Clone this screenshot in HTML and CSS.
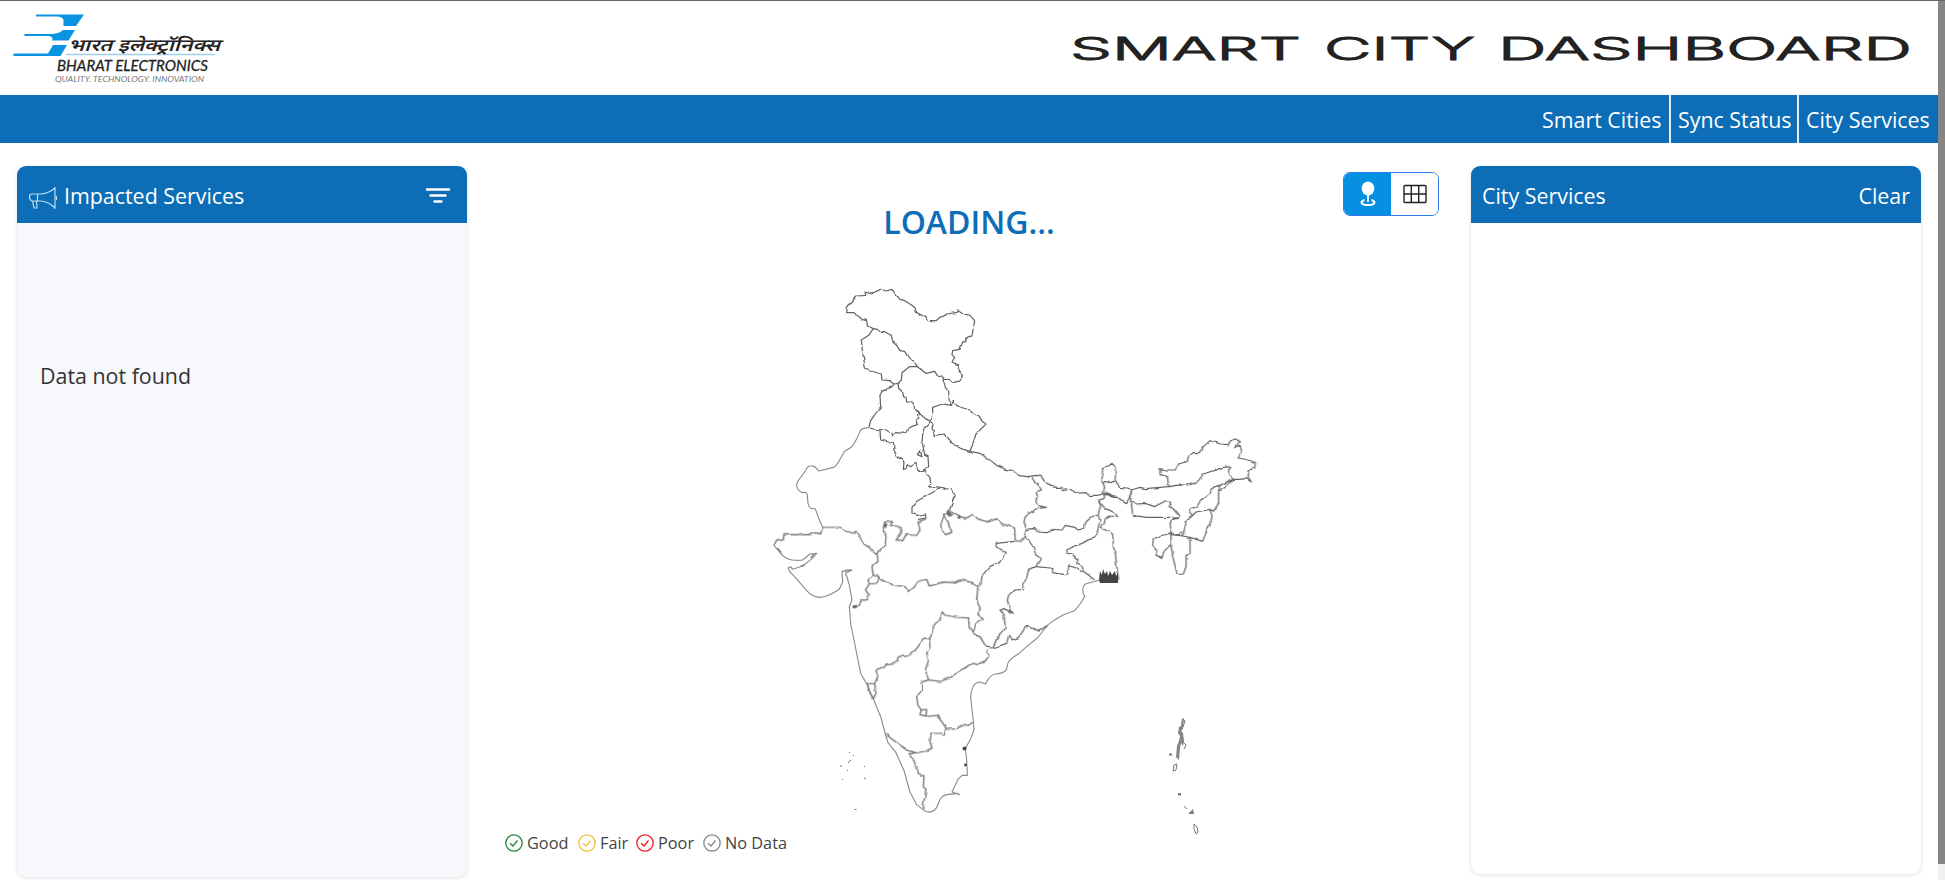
FILE: index.html
```html
<!DOCTYPE html>
<html lang="en">
<head>
<meta charset="utf-8">
<title>Smart City Dashboard</title>
<link rel="stylesheet" href="styles.css">
</head>
<body>
<div class="page">
  <header class="header">
    <svg class="logo" viewBox="0 0 230 90" width="230" height="90">
      <g fill="#0a93e0">
        <path d="M36 14.500H84L76 26H63.500V20Q63 17 58 16.500H36Z"/>
        <path d="M24.500 34H52Q60 33.500 63 30H75L68.500 40.500H52Q54 37.500 49 36H24.500Z"/>
        <path d="M13.500 53.500H48L53 45H67L60.500 56H13.500Z"/>
      </g>
      <path d="M66 54.500H215" stroke="#9fd0f0" stroke-width="1.500"/>
      <text class="logo-hindi" x="68" y="51" textLength="152" lengthAdjust="spacingAndGlyphs">भारत इलेक्ट्रॉनिक्स</text>
      <text class="logo-name" x="57" y="70.500" textLength="151" lengthAdjust="spacingAndGlyphs">BHARAT ELECTRONICS</text>
      <text class="logo-tag" x="55" y="82" textLength="149" lengthAdjust="spacingAndGlyphs">QUALITY. TECHNOLOGY. INNOVATION</text>
    </svg>
    <svg class="title" viewBox="0 0 840 40" width="840" height="40">
      <text x="-2" y="31" textLength="231" lengthAdjust="spacingAndGlyphs">SMART</text>
      <text x="252" y="31" textLength="151" lengthAdjust="spacingAndGlyphs">CITY</text>
      <text x="426" y="31" textLength="414" lengthAdjust="spacingAndGlyphs">DASHBOARD</text>
    </svg>
  </header>
  <nav class="nav">
    <a class="nav-item cities">Smart Cities</a>
    <a class="nav-item sync">Sync Status</a>
    <a class="nav-item services">City Services</a>
  </nav>
  <main class="main">
    <section class="card impacted">
      <div class="card-head">
        <svg class="horn" viewBox="0 0 30 24" width="30" height="24" fill="none" stroke="#b9dcf5" stroke-width="1.200">
          <path d="M27 1V23M27 2Q20 8 12 8H4Q1.500 8 1.500 11T4 15H12Q20 15 27 22M9.500 8V15M4.500 15L6 22H9L8.500 15M28.500 10V14"/>
        </svg>
        <span>Impacted Services</span>
        <svg class="filter" viewBox="0 0 26 18" width="26" height="18" stroke="#fff" stroke-width="2.400" stroke-linecap="round">
          <path d="M2 3.500H24M5.500 9.500H20.500M9.500 15.500H16.500"/>
        </svg>
      </div>
      <div class="card-body"><p class="empty">Data not found</p></div>
    </section>
    <section class="center">
      <h1 class="loading">LOADING...</h1>
      <div class="toggle">
        <button class="toggle-btn active">
          <svg viewBox="0 0 20 26" width="20" height="26">
            <ellipse cx="10" cy="7.500" rx="6.300" ry="7" fill="#fff"/>
            <path d="M10 12V21M6.500 19Q3.500 20 3.500 21.500Q4 24 10 24T16.500 21.500Q16.500 20 13.500 19" fill="none" stroke="#fff" stroke-width="1.900"/>
          </svg>
        </button>
        <button class="toggle-btn">
          <svg viewBox="0 0 24 20" width="24" height="20" fill="none" stroke="#222" stroke-width="1.400">
            <rect x="1" y="1.500" width="22" height="17" rx="1"/>
            <path d="M1 10H23M8.300 1.500V18.500M15.700 1.500V18.500"/>
          </svg>
        </button>
      </div>
      <svg class="map" viewBox="760 270 520 570" width="520" height="570">
        <defs>
          <filter id="rough" filterUnits="userSpaceOnUse" x="760" y="270" width="520" height="570">
            <feTurbulence type="fractalNoise" baseFrequency="0.16" numOctaves="1" seed="4" result="n"/>
            <feDisplacementMap in="SourceGraphic" in2="n" scale="3.5" xChannelSelector="R" yChannelSelector="G"/>
          </filter>
        </defs>
        <g class="borders" filter="url(#rough)">
          <!-- northern states -->
          <g transform="translate(760 270) scale(.33333)">
            <path d="M340 176L322 168 320 152 306 148 292 136 282 128 260 128 262 108 274 96 290 78 320 76 318 66 332 72 362 58 378 63 396 58 406 72 420 88 434 92 450 102 464 112 470 128 486 136 498 140 504 152 528 152 540 142 560 132 592 127 594 122 606 130 630 136 644 152 636 196 622 202 616 212 608 216 600 238 578 242 576 254 584 262 576 276 598 286 598 308 610 318 600 332 582 337 566 328 550 328 546 318 534 320 524 304 498 310 472 290"/>
            <path d="M340 176L352 178 362 188 372 184 386 192 394 196 398 216 410 226 420 242 434 244 446 264 460 272 472 290 448 290 426 308 424 330 414 340 402 342 388 332 366 330 364 312 344 306 316 294 308 250 304 210 326 196Z"/>
            <path d="M414 340L416 356 426 360 430 376 438 382 440 396 452 396 462 404 464 420 474 424 488 436 496 446 512 454 518 440 518 412 548 402 574 406 568 396 566 366 556 352 548 328"/>
            <path d="M402 342L396 350 366 364 360 376 362 410 346 432 332 452 326 474 350 478 378 480 392 488 396 498 404 488 438 490 442 478 454 470 472 464 466 450 476 444 476 426"/>
            <path d="M360 480L362 510 386 516 400 514 402 540 412 560 424 566 432 576 430 598 438 596 442 584 452 590 468 580 474 604 494 598 506 590 504 560 494 556 486 512 490 480 512 454M480 542L486 560 472 554Z"/>
            <path d="M574 406L580 394 590 406 606 414 630 420 640 432 656 440 678 462 662 478 648 492 640 516 630 544 604 536 572 518 566 506 552 492 524 496 516 474 520 460 512 454"/>
            <path d="M494 598L500 612 510 622 512 640 502 652 520 650 544 652 560 656 578 660 584 676 578 692 570 720M540 654L510 672 470 694 456 712 456 730 472 736 496 732 498 744 474 748"/>
          </g>
          <!-- eastern states -->
          <g transform="translate(960 400) scale(.33333)">
            <path d="M30 154L60 160 86 178 110 196 136 208 158 212 176 226 200 230 232 226 244 230 256 248 286 262 306 262 308 272 330 268 350 280 378 278 386 286 412 286 430 282"/>
            <path d="M220 230L222 244 236 256 244 270 228 276 232 288 228 300 236 316 256 322 224 328 196 350 192 366 198 384"/>
            <path d="M430 282L434 262 426 240 428 202 446 198 456 190 466 200 466 242 452 248 430 244M466 242L478 262 500 264 514 270 510 290 500 308 480 298 474 288 458 290 450 282 440 284 434 280 430 282"/>
            <path stroke-width="7" d="M434 284L442 280 452 288 464 290 478 292"/>
            <path d="M514 270L540 262 556 266 626 260 622 230 600 224 600 206 616 210 646 210 656 192 682 184 686 168 700 158 718 158 730 140 750 122 782 132 804 134 812 122 826 116 838 126 826 142 840 136 846 158 834 174 866 180 886 188 884 204 868 212 864 230 874 246 860 236 836 238 820 238 806 224 806 210 814 200 790 202 730 222 712 246 690 254 650 256 626 260"/>
            <path d="M820 238L784 254 776 256 760 262 750 280 722 300 712 318 690 330 696 348M820 238L798 260 780 272 776 256M776 272L776 310 760 334 750 328 730 332 708 336 696 348 680 362 668 408 690 412 728 424 740 390 752 370 756 350 750 328"/>
            <path d="M668 408L636 404M690 416L690 462 678 466 678 500 670 522 652 524 644 492 638 470 634 440 632 396 626 402 598 408 580 418 578 438 590 452 588 466 606 472 614 452 634 432"/>
            <path d="M514 270L512 306 530 312 556 310 584 320 610 306 632 306 628 320 642 330 658 348 652 356 636 352 560 352 518 346 514 310M656 352L640 358 630 370 636 404 658 404 666 394"/>
            <path d="M434 284L432 296 416 300 424 312 436 326 464 338 472 350 446 348 436 356 432 372 422 380 440 392 458 402 460 440 466 460 472 512 476 540"/>
            <path d="M416 300L422 320 414 344 408 344 394 352 378 366 370 386 354 390 344 382 316 376 306 390 280 388 262 398 234 396 224 386 198 388"/>
            <path d="M414 344L420 362 414 386 410 408 392 416 366 430 340 440 320 450 322 460 336 462 354 480 350 492 366 498 370 514 386 526 404 540"/>
            <path d="M228 500L268 504 278 502 278 518 290 520 316 524 324 520 326 498 344 502 366 516M198 388L196 410 220 440 228 466 242 474 228 500"/>
            <path d="M164 424L108 430 112 440 136 458 118 488 92 500 66 530 62 556"/>
            <path d="M228 500L210 506 200 530 186 568 162 570 148 584 142 600 150 630 160 640 132 626 120 630 132 644 136 686 116 710 98 742"/>
            <path d="M40 700L60 710 72 730 80 742 98 744 140 730 146 706 160 720 178 710 200 676 220 684 236 694 262 676"/>
          </g>
          <!-- western, central and southern states -->
          <g transform="translate(760 500) scale(.33333)">
            <path d="M188 82L240 82 262 94 280 100 288 94 300 112 312 132 330 144 352 164M188 82L182 102 166 98 150 104 72 104 70 116 50 120 42 136"/>
            <path d="M352 164L354 184 336 200 340 224 324 240 328 252 350 250 354 230 340 226M330 250L316 270 328 284 320 300 302 300 298 318 278 322"/>
            <path d="M352 164L358 152 376 136 378 108 370 82 374 66 396 64 392 76 420 80 424 100 408 120 428 122 438 104 470 106 480 90 474 66 498 56"/>
            <path d="M570 30L556 44 542 66 544 92 560 104 576 96 564 68 552 40M570 34L600 50 620 54 640 42 652 56 684 66 710 56 726 72 764 84 766 122 784 124 796 110"/>
            <path stroke-width="9" d="M562 36L574 46M592 50L602 52M374 72L380 78M278 320L292 320"/>
            <path d="M354 234L376 246 410 256 434 260 446 274 460 264 476 244 500 238 508 258 550 246 580 248 600 240 640 248 652 258 660 256M654 260L650 300 658 320 654 344 670 358 648 370 640 396"/>
            <path d="M508 416L520 396 520 374 540 362 546 336 560 346 590 352 626 354 628 384 640 398M508 416L494 414 468 448 446 468 414 470 412 486 382 492 348 512 354 530 344 550 322 552 330 580 340 596 348 580 344 550"/>
            <path d="M508 416L510 440 500 460 506 480 496 510 506 540 540 544 570 534 590 518 610 506 640 490 652 494 680 480 690 466 680 450"/>
            <path d="M506 540L484 546 486 570 470 590 474 616 484 630 500 628 498 648 480 644 484 628M500 650L530 646 546 666 558 684 552 706 542 700 514 700 510 724 516 744 496 754 466 758 440 750 410 728 378 704M558 688L590 686 604 676 622 678 640 664"/>
            <path d="M446 762L466 758M446 762L460 780 470 796 474 820 492 828 490 860 498 868 488 928"/>
          </g>
        </g>
        <!-- coasts and smooth outer borders -->
        <g class="coast" transform="translate(760 500) scale(.33333)">
          <path d="M326 -216Q306 -218 300 -206Q290 -180 276 -160L254 -146 240 -122Q228 -98 218 -97L176 -87Q164 -104 152 -102Q142 -102 138 -90L122 -68Q110 -55 110 -42Q112 -28 128 -22Q142 -26 142 -14L144 10Q148 24 154 26Q166 22 168 32L174 50 188 82"/>
          <path d="M42 136L60 158Q76 178 96 180T128 180L150 162 170 160 156 176 128 198 98 208 92 200 84 204 90 216 104 230 140 272Q158 292 180 292T238 268L248 246 246 214 276 210 256 220 262 234 268 256 276 300 268 320 272 372 282 420 292 470 302 520 320 552 340 596 362 650 376 702 384 728 408 758 432 812 450 876 470 914 488 928Q506 944 524 930C540 916 532 890 560 884L596 880M600 884L576 876 594 838 606 826 622 826 620 780 616 746 632 716 642 690 640 664 636 630 632 590Q636 546 660 546L676 552Q690 524 706 522C744 518 740 506 742 496C744 480 760 472 780 458L800 440 832 414 862 376 880 362 910 344 944 332 960 312 974 290Q962 264 976 252L1020 240"/>
          <path stroke-width="5" d="M52 144L64 158M122 198L134 196M152 174L162 162M254 212L274 210"/>
        </g>
        <g fill="#444">
          <path d="M1099 580L1100 571 1102 575 1103 569 1105 574 1107 571 1108 576 1110 571 1112 575 1115 571 1116 576 1118 573 1118 583 1100 583Z"/>
          <circle cx="964.500" cy="748.500" r="2"/><circle cx="965.500" cy="765" r="1.400"/>
          <path d="M1182 718L1184 719 1183 729 1181 731 1183 733 1184 741 1183 746 1181 743 1180 748 1179 760 1176 757 1177 746 1179 741 1180 736 1178 733 1179 727 1181 726Z" opacity=".65"/>
          <path d="M1188 814L1193 809 1194 814ZM1169 753.500H1172V755.500H1169ZM1178 793H1181V795.500H1178Z" opacity=".7"/>
        </g>
        <g fill="none" stroke="#777" stroke-width="1">
          <path d="M1174 765L1177 764 1176 770 1173 771ZM1184 806L1187 809M1194 824L1197 827 1198 832 1196 834 1194 829ZM849 752L850 753M853 756L854 755M851 760L848 763M840 767L842 765M864 766L865 767M847 770L848 771M842 779L843 780M864 778L866 779M854.500 809.500H856.500M1183 719L1185 721 1183 727M1183 742L1186 745 1184 749"/>
        </g>
      </svg>
      <ul class="legend">
        <li class="good"><svg viewBox="0 0 18 18"><circle cx="9" cy="9" r="8.200"/><path d="M5 9.300L8 12L12.500 6.500"/></svg><span>Good</span></li>
        <li class="fair"><svg viewBox="0 0 18 18"><circle cx="9" cy="9" r="8.200"/><path d="M5 9.300L8 12L12.500 6.500"/></svg><span>Fair</span></li>
        <li class="poor"><svg viewBox="0 0 18 18"><circle cx="9" cy="9" r="8.200"/><path d="M5 9.300L8 12L12.500 6.500"/></svg><span>Poor</span></li>
        <li class="none"><svg viewBox="0 0 18 18"><circle cx="9" cy="9" r="8.200"/><path d="M5 9.300L8 12L12.500 6.500"/></svg><span>No Data</span></li>
      </ul>
    </section>
    <section class="card city">
      <div class="card-head"><span>City Services</span><a class="clear">Clear</a></div>
      <div class="card-body"></div>
    </section>
  </main>
</div>
<div class="scrollbar"><div class="thumb"></div></div>
</body>
</html>
```

FILE: styles.css
```css
* { box-sizing: border-box; }
body {
  margin: 0;
  height: 880px;
  display: flex;
  overflow: hidden;
  background: #fff;
  border-top: 1px solid #666;
  font-family: "Open Sans", "Noto Sans", sans-serif;
  font-size: 21.4px;
  color: #333;
}
.page { width: 1938px; display: flex; flex-direction: column; }
.header { height: 94px; display: flex; justify-content: space-between; padding-right: 26px; }
.logo { margin-top: -1px; }
.logo text { font-style: italic; fill: #222; }
.logo-hindi { font: 600 17px "Noto Sans Devanagari", "Noto Sans", sans-serif; }
.logo-name { font: 16px Lato, sans-serif; stroke: #222; stroke-width: .3; }
.logo .logo-tag { font: 8px Lato, sans-serif; font-style: italic; fill: #777; }
.title { margin-top: 28px; overflow: visible; }
.title text { font: 300 31.5px Inter, sans-serif; fill: #222; stroke: #222; stroke-width: .9; }
.nav { height: 48px; background: #0d6db7; display: flex; justify-content: flex-end; }
.nav-item { color: #fff; line-height: 49px; padding-left: 7px; white-space: nowrap; }
.nav-item + .nav-item { border-left: 2px solid #e4f0f9; }
.cities { width: 134px; }
.sync { width: 128px; }
.services { width: 141px; }
.main { flex: 1; display: flex; padding: 23px 17px 0; }
.card { width: 450px; border-radius: 9px; box-shadow: 0 1px 4px rgba(0, 0, 0, .12); }
.card-head {
  height: 57px;
  background: #0d6db7;
  color: #fff;
  border-radius: 9px 9px 0 0;
  display: flex;
  align-items: center;
  padding: 1px 11px 0;
  white-space: nowrap;
}
.horn { margin: 6px 6px 0 0; }
.filter { margin-left: auto; margin-right: 5px; }
.clear { margin-left: auto; }
.impacted { height: 711px; background: #f7f8fb; }
.city { height: 707.5px; }
.empty { margin: 137px 0 0 23px; line-height: 32px; }
.center { flex: 1; position: relative; display: flex; flex-direction: column; align-items: center; }
.loading { margin: 33px 0 0; font-size: 32px; line-height: 46px; font-weight: 600; color: #0d6db7; }
.toggle {
  position: absolute; right: 32px; top: 5.5px;
  width: 96px; height: 44.5px;
  display: flex; overflow: hidden;
  border: 1.5px solid #2f7cf0; border-radius: 7px;
}
.toggle-btn { flex: 1; border: 0; padding: 0; background: #fff; display: flex; align-items: center; justify-content: center; }
.toggle-btn.active { background: #0590e2; }
.map { margin: 25px 0 0 101px; flex: none; }
.borders, .coast { fill: none; stroke: #646464; stroke-width: 3.7; stroke-linejoin: round; }
.coast { stroke: #8b8b8b; stroke-width: 3.4; }
.legend {
  align-self: flex-start; margin: -9px 0 0 38px; padding: 0; list-style: none;
  display: flex; font-size: 16.3px; line-height: 24px;
}
.legend li { display: flex; align-items: center; gap: 4px; white-space: nowrap; }
.legend svg { width: 18px; height: 18px; fill: none; stroke: currentColor; stroke-width: 1.3; }
.legend span { color: #444; }
.good { color: #23863a; width: 73px; }
.fair { color: #edc23c; width: 58px; }
.poor { color: #ee1c25; width: 67px; }
.none { color: #85878c; }
.scrollbar { width: 7px; background: #f0f0f0; }
.thumb { height: 863px; background: #858585; }
```
